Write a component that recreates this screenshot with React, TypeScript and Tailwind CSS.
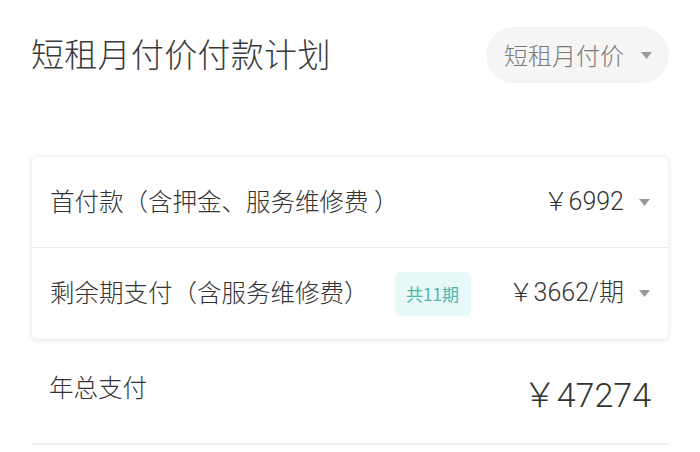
const font = { fontFamily: '"Noto Sans CJK SC", "Noto Sans", sans-serif' };
const numFont = { fontFamily: 'Roboto, "Noto Sans CJK SC", sans-serif' };

type Row = {
  label: string;
  amount: string;
  badge?: string;
};

const rows: Row[] = [
  { label: '首付款（含押金、服务维修费 ）', amount: '￥6992' },
  { label: '剩余期支付（含服务维修费）', amount: '￥3662/期', badge: '共11期' },
];

function Caret() {
  return (
    <svg width="11" height="7" viewBox="0 0 11 7" className="shrink-0">
      <path d="M0 0 H11 L5.5 7 Z" fill="#9a9a9a" />
    </svg>
  );
}

export default function App() {
  return (
    <div className="w-[700px] h-[452px] bg-white overflow-hidden px-[31px] pt-[27px] font-light" style={font}>
      <div className="flex items-center justify-between h-[56px]">
        <h1 className="text-[33px] leading-none text-[#3a3a3a] tracking-[0.3px] font-light -mt-[3px]">短租月付价付款计划</h1>
        <div className="flex items-center h-[56px] rounded-full bg-[#f5f5f5] pl-[18px] pr-[17px] gap-[17px]">
          <span className="text-[24px] leading-none text-[#7a7a7a]">短租月付价</span>
          <Caret />
        </div>
      </div>

      <div className="mt-[73px] rounded-[6px] bg-white shadow-[0_1px_6px_rgba(0,0,0,0.08)] border border-[#f0f0f0]">
        {rows.map((row, i) => (
          <div
            key={i}
            className={`flex items-center h-[91px] pl-[18px] pr-[18px] ${i === 0 ? 'border-b border-[#ececec]' : ''}`}
          >
            <span className="text-[24.5px] leading-none text-[#333] -mt-[2px]">{row.label}</span>
            {row.badge && (
              <span className="ml-[26px] flex items-center justify-center w-[76px] h-[44px] rounded-[6px] bg-[#e8f7f7] text-[17px] text-[#4db6ac] font-normal">
                {row.badge}
              </span>
            )}
            <span className="ml-auto text-[25px] leading-none text-[#333] -mt-[2px] font-light" style={numFont}>
              {row.amount}
            </span>
            <span className="ml-[15px]">
              <Caret />
            </span>
          </div>
        ))}
      </div>

      <div className="flex items-start justify-between h-[105px] border-b-2 border-[#f0f0f0] pl-[18px] pr-[18px]">
        <span className="mt-[29px] text-[24.5px] leading-[36px] text-[#333]">年总支付</span>
        <span className="mt-[35px] text-[34px] leading-[40px] text-[#333] font-light" style={numFont}>
          ￥47274
        </span>
      </div>
    </div>
  );
}
